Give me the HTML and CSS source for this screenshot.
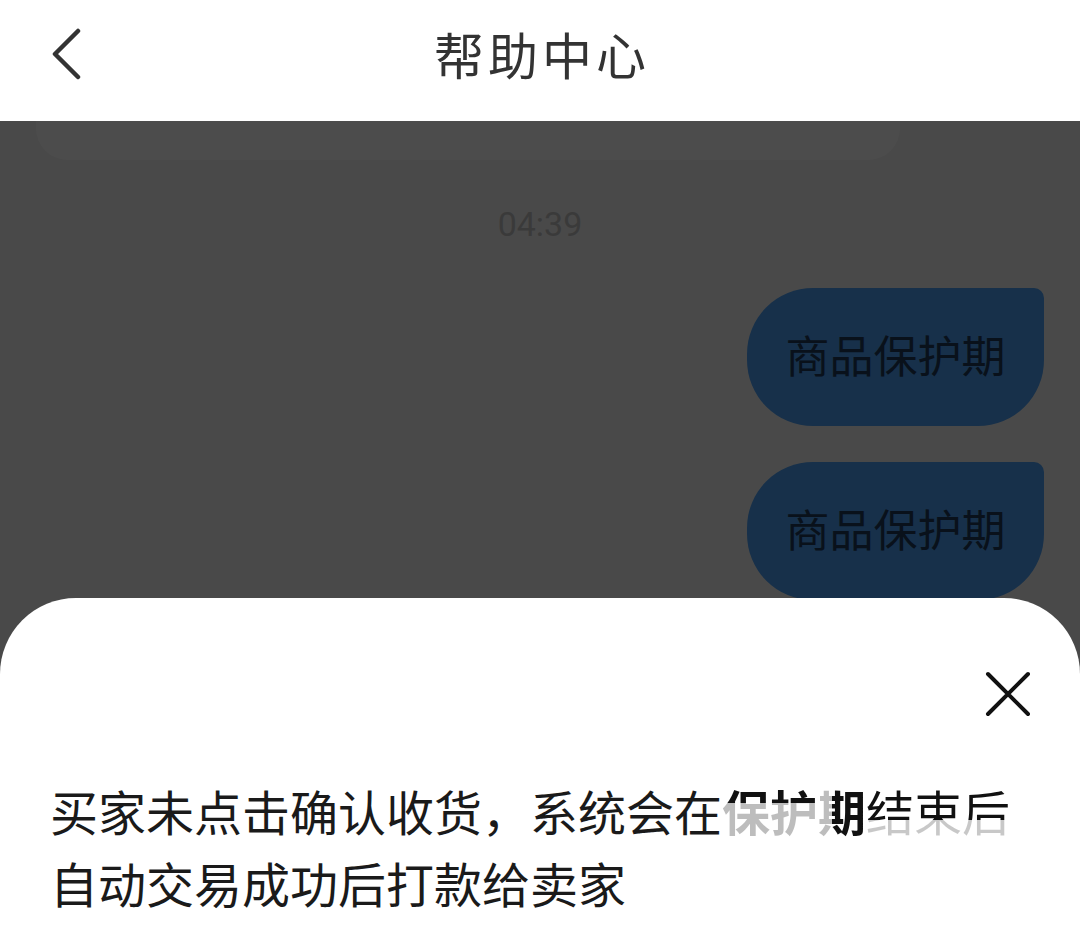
FILE: index.html
```html
<!DOCTYPE html>
<html lang="zh-CN">
<head>
    <meta charset="UTF-8">
    <title>帮助中心</title>
    <link rel="stylesheet" href="styles.css">
</head>
<body>

    <div class="header">
        <span class="back">
            <svg width="34" height="52" viewBox="0 0 34 52">
                <path d="M29 3 L6 26 L29 49" fill="none" stroke="#333" stroke-width="4.5" stroke-linecap="round" stroke-linejoin="round"/>
            </svg>
        </span>
        <h1>帮助中心</h1>
    </div>

    <div class="chat">
        <div class="card"></div>
        <div class="time">04:39</div>
        <div class="bubble">商品保护期</div>
        <div class="bubble">商品保护期</div>
    </div>

    <!-- dim layer behind the popup -->
    <div class="mask"></div>

    <div class="sheet">
        <div class="sheet-top">
            <span class="close">
                <svg width="46" height="46" viewBox="0 0 46 46">
                    <path d="M3 3 L43 43 M43 3 L3 43" fill="none" stroke="#111" stroke-width="4" stroke-linecap="round"/>
                </svg>
            </span>
        </div>
        <p class="answer">买家未点击确认收货，系统会在<b class="hl-a">保护</b><b class="hl-b">期</b><span class="hl-c">结束后</span>自动交易成功后打款给卖家</p>
    </div>

</body>
</html>
```

FILE: styles.css
```css
body {
    margin: 0;
    width: 1080px;
    height: 937px;
    overflow: hidden;
    position: relative;
    font-family: "Noto Sans CJK SC", "Noto Sans", sans-serif;
    background: #f5f5f5;
}
.header {
    height: 121px;
    background: #fff;
    display: flex;
    align-items: center;
    justify-content: center;
    position: relative;
    z-index: 2;
}
.header h1 {
    margin: 0;
    font-size: 50px;
    font-weight: 400;
    color: #333;
    letter-spacing: 4px;
    padding-left: 4px;
    line-height: 1;
    margin-top: -16px;
}
.back {
    position: absolute;
    left: 49px;
    top: 28px;
}
.chat {
    display: flex;
    flex-direction: column;
    align-items: flex-end;
    padding: 0 36px;
}
.card {
    align-self: stretch;
    margin-right: 144px;
    height: 80px;
    margin-top: -41px;
    background: #fff;
    border-radius: 32px;
}
.time {
    align-self: center;
    font-family: Roboto, sans-serif;
    font-size: 34px;
    color: #c4c4c4;
    margin-top: 44px;
    line-height: 40px;
}
.bubble {
    margin-top: 44px;
    width: 297px;
    height: 138px;
    box-sizing: border-box;
    padding-bottom: 6px;
    display: flex;
    align-items: center;
    justify-content: center;
    background: #4da0f7;
    color: #1f3b5a;
    font-size: 44px;
    border-radius: 66px 10px 66px 66px;
}
.bubble + .bubble {
    margin-top: 36px;
}
.mask {
    position: absolute;
    top: 121px;
    left: 0;
    right: 0;
    bottom: 0;
    background: rgba(0, 0, 0, 0.7);
}
.sheet {
    position: absolute;
    top: 598px;
    left: 0;
    right: 0;
    bottom: 0;
    background: #fff;
    border-radius: 76px 76px 0 0;
}
.sheet-top {
    display: flex;
    justify-content: flex-end;
    padding: 73px 49px 0 0;
}
.answer {
    margin: 52px 0 0 50px;
    font-size: 48px;
    line-height: 72px;
    color: #1a1a1a;
    width: 1000px;
}
.hl-a, .hl-b, .hl-c {
    -webkit-background-clip: text;
    background-clip: text;
    color: transparent;
}
.hl-a {
    background-image: linear-gradient(to bottom, #111 0, #111 40%, #bdbdbd 40%, #bdbdbd 100%);
}
.hl-b {
    background-image: linear-gradient(to right, #bdbdbd 0, #bdbdbd 30%, #111 30%, #111 100%);
}
.hl-c {
    background-image: linear-gradient(to bottom, #111 0, #111 64%, #c8c8c8 64%, #c8c8c8 100%);
}
```
